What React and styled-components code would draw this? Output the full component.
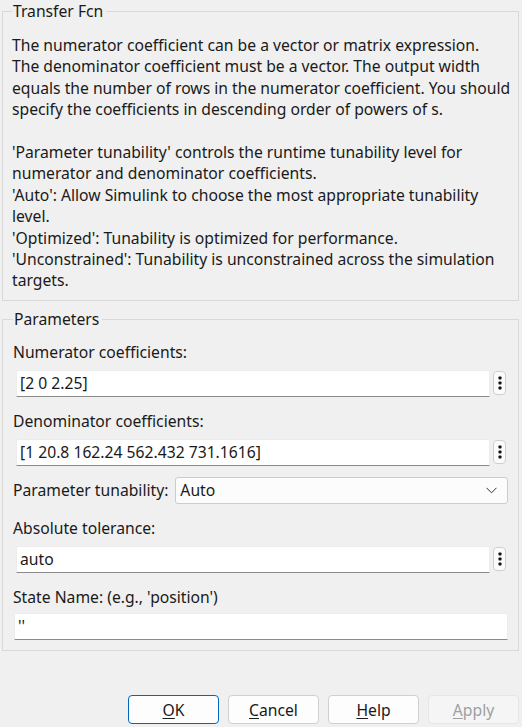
import styled, { createGlobalStyle } from 'styled-components';

const GlobalStyle = createGlobalStyle`
  html, body {
    margin: 0;
    padding: 0;
    background: #f0f0f0;
  }
  body {
    font-family: 'Noto Sans', 'Open Sans', sans-serif;
    font-size: 15.7px;
    color: #1a1a1a;
  }
`;

const description = [
  'The numerator coefficient can be a vector or matrix expression.',
  'The denominator coefficient must be a vector. The output width',
  'equals the number of rows in the numerator coefficient. You should',
  'specify the coefficients in descending order of powers of s.',
  '',
  "'Parameter tunability' controls the runtime tunability level for",
  'numerator and denominator coefficients.',
  "'Auto': Allow Simulink to choose the most appropriate tunability",
  'level.',
  "'Optimized': Tunability is optimized for performance.",
  "'Unconstrained': Tunability is unconstrained across the simulation",
  'targets.',
];

function DotsIcon() {
  return (
    <svg width="4" height="14" viewBox="0 0 4 14">
      <rect x="0.5" y="0.5" width="3" height="3" rx="0.8" fill="#111" />
      <rect x="0.5" y="5.5" width="3" height="3" rx="0.8" fill="#111" />
      <rect x="0.5" y="10.5" width="3" height="3" rx="0.8" fill="#111" />
    </svg>
  );
}

function Chevron() {
  return (
    <svg width="11" height="7" viewBox="0 0 11 7">
      <path d="M0.5 0.8 L5.5 5.8 L10.5 0.8" fill="none" stroke="#333" strokeWidth="1" />
    </svg>
  );
}

function Field({ label, value, dots, first, tight }) {
  return (
    <FieldBlock $first={first} $tight={tight}>
      <Label>{label}</Label>
      <InputRow>
        <TextBox $inset={dots}>{value}</TextBox>
        {dots && (
          <DotsButton>
            <DotsIcon />
          </DotsButton>
        )}
      </InputRow>
    </FieldBlock>
  );
}

export default function App() {
  return (
    <>
      <GlobalStyle />
      <Dialog>
        <Group $top>
          <Legend>Transfer Fcn</Legend>
          <Description>
            {description.map((line, i) => (
              <Line key={i}>{line || '\u00a0'}</Line>
            ))}
          </Description>
        </Group>

        <Group>
          <Legend>Parameters</Legend>
          <Field label="Numerator coefficients:" value="[2 0 2.25]" dots first />
          <Field label="Denominator coefficients:" value="[1 20.8 162.24 562.432 731.1616]" dots />
          <SelectRow>
            <Label>Parameter tunability:</Label>
            <Select>
              <span>Auto</span>
              <Chevron />
            </Select>
          </SelectRow>
          <Field label="Absolute tolerance:" value="auto" dots />
          <Field label="State Name: (e.g., 'position')" value="''" tight />
        </Group>

        <Buttons>
          <Button $primary>
            <u>O</u>K
          </Button>
          <Button>
            <u>C</u>ancel
          </Button>
          <Button>
            <u>H</u>elp
          </Button>
          <Button $disabled>
            <u>A</u>pply
          </Button>
        </Buttons>
      </Dialog>
    </>
  );
}

const Dialog = styled.div`
  display: flex;
  flex-direction: column;
  height: 727px;
  padding: 1px 3px 3px 2px;
  box-sizing: border-box;
`;

const Group = styled.fieldset`
  margin: ${(p) => (p.$top ? '0' : '8px 0 0 0')};
  padding: ${(p) => (p.$top ? '13px 9px 8px 9px' : '6px 10px 10px 10px')};
  border: 1px solid #d9d9d9;
  border-radius: 0;
  min-width: 0;
`;

const Legend = styled.legend`
  padding: 0 3px 0 1px;
  margin-left: 0;
  font-size: 15.7px;
  line-height: 21px;
`;

const Description = styled.div`
  line-height: 21.4px;
  white-space: nowrap;
`;

const Line = styled.div``;

const FieldBlock = styled.div`
  display: flex;
  flex-direction: column;
  gap: ${(p) => (p.$tight ? '6px' : '8px')};
  margin-top: ${(p) => (p.$first ? '6px' : '14px')};
`;

const Label = styled.div`
  line-height: 20px;
  white-space: nowrap;
`;

const InputRow = styled.div`
  display: flex;
  align-items: center;
  gap: 3px;
`;

const TextBox = styled.div`
  flex: 1;
  height: 27px;
  box-sizing: border-box;
  margin-left: ${(p) => (p.$inset ? '3px' : '1px')};
  padding: 0 3px;
  display: flex;
  align-items: center;
  background: #fff;
  border: 1px solid #ececec;
  border-bottom: 1px solid #8a8a8a;
  border-radius: 2px 2px 0 0;
`;

const DotsButton = styled.div`
  width: 13px;
  height: 24px;
  box-sizing: border-box;
  margin-right: 2px;
  display: flex;
  align-items: center;
  justify-content: center;
  background: #fbfbfb;
  border: 1px solid #cfcfcf;
  border-radius: 4px;
`;

const SelectRow = styled.div`
  display: flex;
  align-items: center;
  gap: 7px;
  margin-top: 11px;
`;

const Select = styled.div`
  flex: 1;
  height: 27px;
  box-sizing: border-box;
  padding: 0 10px 0 4px;
  display: flex;
  align-items: center;
  justify-content: space-between;
  background: #fcfcfc;
  border: 1px solid #cccccc;
  border-radius: 3px;
`;

const Buttons = styled.div`
  margin-top: auto;
  display: flex;
  justify-content: flex-end;
  gap: 9px;
`;

const Button = styled.div`
  width: 91px;
  height: 29px;
  box-sizing: border-box;
  display: flex;
  align-items: center;
  justify-content: center;
  background: ${(p) => (p.$disabled ? '#f5f5f5' : '#fdfdfd')};
  color: ${(p) => (p.$disabled ? '#a0a0a0' : '#1a1a1a')};
  border: 1px solid ${(p) => (p.$primary ? '#0067c0' : p.$disabled ? '#e5e5e5' : '#d0d0d0')};
  border-radius: 4px;
  font-size: 15.7px;

  u {
    text-decoration-thickness: 1px;
    text-underline-offset: 2px;
  }
`;
